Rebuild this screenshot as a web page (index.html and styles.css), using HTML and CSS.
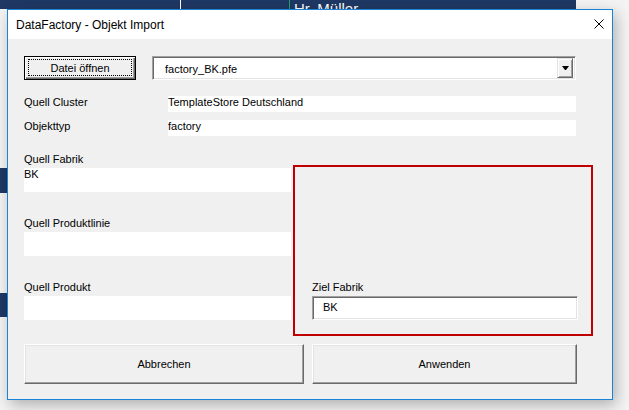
FILE: index.html
```html
<!DOCTYPE html>
<html>
<head>
<meta charset="utf-8">
<link rel="stylesheet" href="styles.css">
</head>
<body>
<div class="desktop">
  <div class="sheet-top">
    <div class="cell cell-a"></div>
    <div class="cell cell-b"></div>
    <div class="cell cell-c">Hr. Müller</div>
  </div>
  <div class="sheet-side">
    <div class="side-gap g1"></div>
    <div class="side-navy n1"></div>
    <div class="side-gap g2"></div>
    <div class="side-navy n2"></div>
  </div>

  <div class="dialog">
    <div class="titlebar">
      <span class="title">DataFactory - Objekt Import</span>
      <svg class="close" width="10" height="10" viewBox="0 0 10 10">
        <path d="M0.5 0.5 L9.5 9.5 M9.5 0.5 L0.5 9.5" stroke="#000" stroke-width="1" fill="none"/>
      </svg>
    </div>
    <div class="client">
      <div class="row-file">
        <div class="btn-default"><span class="focus">Datei öffnen</span></div>
        <div class="combo">
          <span class="combo-text">factory_BK.pfe</span>
          <div class="combo-btn">
            <svg width="7" height="4" viewBox="0 0 7 4"><polygon points="0,0 7,0 4,4 3,4" fill="#000"/></svg>
          </div>
        </div>
      </div>

      <div class="info-row first">
        <div class="info-label">Quell Cluster</div>
        <div class="info-field">TemplateStore Deutschland</div>
      </div>
      <div class="info-row">
        <div class="info-label">Objekttyp</div>
        <div class="info-field">factory</div>
      </div>

      <div class="lower">
        <div class="src-col">
          <div class="group">
            <div class="lbl">Quell Fabrik</div>
            <div class="flat-field">BK</div>
          </div>
          <div class="group">
            <div class="lbl">Quell Produktlinie</div>
            <div class="flat-field"></div>
          </div>
          <div class="group">
            <div class="lbl">Quell Produkt</div>
            <div class="flat-field"></div>
          </div>
        </div>
        <div class="target-frame">
          <div class="lbl">Ziel Fabrik</div>
          <div class="sunken-field">BK</div>
        </div>
      </div>

      <div class="actions">
        <div class="btn btn-cancel">Abbrechen</div>
        <div class="btn btn-apply">Anwenden</div>
      </div>
    </div>
  </div>
</div>
</body>
</html>
```
FILE: styles.css
```css
html, body {
  margin: 0;
  padding: 0;
}
body {
  font-family: "Liberation Sans", Arial, sans-serif;
  font-size: 11px;
  color: #000;
  background: #f3f3f3;
}
.desktop {
  position: relative;
  width: 629px;
  height: 410px;
  overflow: hidden;
  background: #f3f3f3;
}
.sheet-top {
  display: flex;
  height: 9px;
  overflow: hidden;
}
.cell {
  background: #1f3864;
  height: 9px;
}
.cell-a {
  width: 180px;
  border-right: 1px solid #ffffff;
}
.cell-b {
  width: 108px;
  border-right: 1px solid #21a366;
}
.cell-c {
  width: 282px;
  padding-left: 4px;
  color: #fff;
  font-size: 15px;
  line-height: 17px;
  white-space: nowrap;
}
.sheet-side {
  display: flex;
  flex-direction: column;
  width: 7px;
}
.side-gap.g1 { height: 159px; }
.side-gap.g2 { height: 100px; }
.side-navy { background: #1f3864; }
.side-navy.n1 { height: 25px; }
.side-navy.n2 { height: 24px; }

.dialog {
  position: absolute;
  left: 7px;
  top: 9px;
  width: 606px;
  height: 391px;
  box-sizing: border-box;
  border: 1px solid #1883d7;
  background: #f0f0f0;
  display: flex;
  flex-direction: column;
  box-shadow: 3px 5px 14px rgba(0, 0, 0, 0.28);
}
.titlebar {
  height: 29px;
  flex: none;
  background: #fff;
  display: flex;
  align-items: center;
  justify-content: space-between;
  padding: 0 8px 0 8px;
}
.title {
  font-size: 12px;
  margin-top: 1px;
}
.close {
  display: block;
  margin-top: -1px;
}
.client {
  flex: 1;
  padding: 17px 0 0 16px;
}
.row-file {
  display: flex;
  height: 24px;
}
.btn-default {
  width: 112px;
  height: 24px;
  box-sizing: border-box;
  border: 1px solid #000;
  background: #f0f0f0;
  box-shadow: inset 1px 1px #fff, inset -1px -1px #696969, inset -2px -2px #a0a0a0;
  padding: 2px 3px 3px 3px;
  display: flex;
}
.focus {
  flex: 1;
  border: 1px dotted #000;
  display: flex;
  align-items: center;
  justify-content: center;
  line-height: 13px;
  padding-top: 1px;
}
.combo {
  margin-left: 16px;
  width: 424px;
  height: 24px;
  box-sizing: border-box;
  border: 1px solid;
  border-color: #a0a0a0 #fff #fff #a0a0a0;
  box-shadow: inset 1px 1px #696969, inset -1px -1px #e3e3e3;
  background: #fff;
  display: flex;
  align-items: center;
  padding: 1px 2px 1px 1px;
}
.combo-text {
  flex: 1;
  padding-left: 11px;
  padding-top: 1px;
}
.combo-btn {
  width: 16px;
  height: 20px;
  box-sizing: border-box;
  background: #f0f0f0;
  border: 1px solid;
  border-color: #e3e3e3 #696969 #696969 #e3e3e3;
  box-shadow: inset 1px 1px #fff, inset -1px -1px #a0a0a0;
  display: flex;
  align-items: center;
  justify-content: center;
}
.combo-btn svg {
  display: block;
  margin-left: 1px;
}
.info-row {
  display: flex;
  height: 16px;
  margin-top: 8px;
}
.info-row.first {
  margin-top: 16px;
}
.info-label {
  width: 144px;
  line-height: 12px;
}
.info-field {
  width: 408px;
  background: #fff;
  line-height: 12px;
}
.lower {
  display: flex;
  align-items: flex-start;
  margin-top: 17px;
}
.src-col {
  width: 267px;
  display: flex;
  flex-direction: column;
  gap: 25px;
}
.lbl {
  line-height: 13px;
  margin-bottom: 2px;
}
.flat-field {
  height: 24px;
  background: #fff;
  line-height: 13px;
}
.target-frame {
  margin-left: 2px;
  margin-top: 12px;
  width: 300px;
  height: 171px;
  box-sizing: border-box;
  border: 2px solid #c00000;
  display: flex;
  flex-direction: column;
  justify-content: flex-end;
  padding: 0 13px 14px 17px;
}
.sunken-field {
  width: 266px;
  height: 24px;
  box-sizing: border-box;
  border: 1px solid;
  border-color: #a0a0a0 #fff #fff #a0a0a0;
  box-shadow: inset 1px 1px #696969, inset -1px -1px #e3e3e3;
  background: #fff;
  padding-left: 10px;
  line-height: 21px;
}
.actions {
  display: flex;
  gap: 8px;
  margin-top: 8px;
}
.btn {
  height: 40px;
  box-sizing: border-box;
  background: #f0f0f0;
  border: 1px solid;
  border-color: #fff #696969 #696969 #fff;
  box-shadow: inset -1px -1px #a0a0a0, inset 1px 1px #e3e3e3;
  display: flex;
  align-items: center;
  justify-content: center;
}
.btn-cancel { width: 280px; }
.btn-apply { width: 265px; }
```
